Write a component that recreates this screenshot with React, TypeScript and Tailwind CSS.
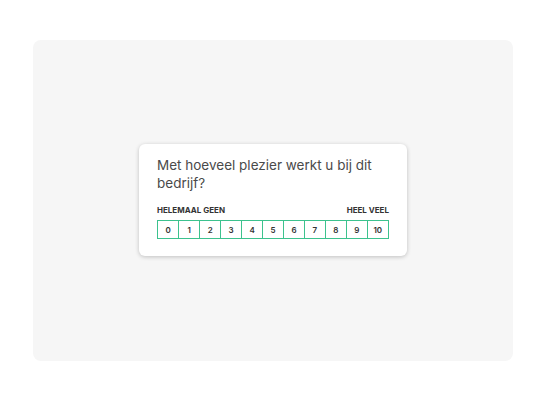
import React from 'react';

const scale = Array.from({ length: 11 }, (_, i) => i);

export default function App() {
  return (
    <div className="flex h-[400px] w-[546px] items-center justify-center bg-white font-['Inter',sans-serif]">
      <div className="flex h-[321px] w-[480px] items-center justify-center rounded-lg bg-[#f6f6f6]">
        <div className="w-[268px] rounded-md bg-white px-[18px] pb-[17px] pt-[12px] shadow-[0_1px_4px_rgba(0,0,0,0.22)]">
          <p className="text-[13.5px] leading-[18px] text-[#4a4a4a]">
            Met hoeveel plezier werkt u bij dit bedrijf?
          </p>
          <div className="mt-[13px] flex justify-between text-[8px] font-bold leading-[10px] text-[#333]">
            <span>HELEMAAL GEEN</span>
            <span>HEEL VEEL</span>
          </div>
          <div className="mt-[5px] flex">
            {scale.map((n) => (
              <button
                key={n}
                className="-ml-[1.5px] flex h-[19px] flex-1 items-center justify-center border-[1.5px] border-[#3cc28e] text-[8px] font-semibold text-[#333] first:ml-0"
              >
                {n}
              </button>
            ))}
          </div>
        </div>
      </div>
    </div>
  );
}
